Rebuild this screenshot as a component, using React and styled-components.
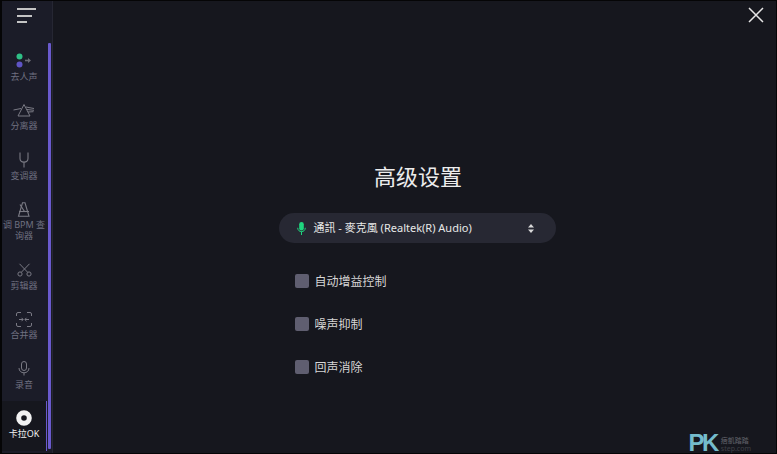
import React from 'react'
import styled, { createGlobalStyle } from 'styled-components'

const FONT = `"Noto Sans", "Noto Sans CJK SC", sans-serif`

const GlobalStyle = createGlobalStyle`
    html, body {
        margin: 0;
        padding: 0;
        background: #000;
    }
    * {
        box-sizing: border-box;
    }
`

const DualDots = () => (
    <svg width="20" height="16" viewBox="0 0 20 16">
        <circle cx="5.500" cy="3.500" r="3" fill="#2fbf86" />
        <circle cx="5.500" cy="11.500" r="3" fill="#5f54c4" />
        <path d="M11 7.500h4" stroke="#6c6c76" strokeWidth="1.600" />
        <path d="M14 5l3 2.500-3 2.500z" fill="#6c6c76" />
    </svg>
)

const Prism = () => (
    <svg width="22" height="14" viewBox="0 0 22 14" fill="none" stroke="#7a7a84" strokeWidth="1">
        <path d="M5 13L11 1.500 17 13z" />
        <path d="M0.500 7L8 5.500M13 4l8 1.500M14 6.500l7 .8M15 9l5.500-.3" />
    </svg>
)

const Fork = () => (
    <svg width="12" height="16" viewBox="0 0 12 16" fill="none" stroke="#7a7a84" strokeWidth="1.100">
        <path d="M2 .5v6c0 2.200 1.800 3.600 4 3.600s4-1.400 4-3.600v-6M6 10v5.500" />
    </svg>
)

const Metronome = () => (
    <svg width="14" height="15" viewBox="0 0 14 15" fill="none" stroke="#7a7a84" strokeWidth="1.100">
        <path d="M5.500 .8h2.500l4 13.500H1.500z" />
        <path d="M2 9.500h10" />
        <path d="M7.500 9.500L3 2.500" />
    </svg>
)

const Scissors = () => (
    <svg width="15" height="14" viewBox="0 0 15 14" fill="none" stroke="#7a7a84" strokeWidth="1">
        <circle cx="3" cy="11" r="2.100" />
        <circle cx="12" cy="11" r="2.100" />
        <path d="M4.300 9.300L12.500.8M10.700 9.300L2.500.8" />
    </svg>
)

const Merge = () => (
    <svg width="16" height="15" viewBox="0 0 16 15" fill="none" stroke="#7a7a84" strokeWidth="1">
        <path d="M.5 4V2a1.500 1.500 0 0 1 1.500-1.500h3M11 .5h3A1.500 1.500 0 0 1 15.500 2v2M15.500 11v2a1.500 1.500 0 0 1-1.500 1.500h-3M5 14.500H2A1.500 1.500 0 0 1 .5 13v-2" />
        <path d="M3 7.500h4M5.500 5.800l1.700 1.700-1.700 1.700M13 7.500H9M10.500 5.800L8.800 7.500l1.700 1.700" />
    </svg>
)

const Mic = () => (
    <svg width="12" height="15" viewBox="0 0 12 15" fill="none" stroke="#7a7a84" strokeWidth="1">
        <rect x="3.500" y=".5" width="5" height="9" rx="2.500" />
        <path d="M1 7c0 3 2.200 4.800 5 4.800s5-1.800 5-4.800M6 11.800v2.700" />
    </svg>
)

const GreenMic = () => (
    <svg width="9" height="13" viewBox="0 0 9 13">
        <rect x="2.200" y="0" width="4.600" height="8.500" rx="2.300" fill="#1fd67f" />
        <path d="M.7 5.800c0 2.400 1.700 3.800 3.800 3.800s3.800-1.400 3.800-3.800M4.500 9.600V13" fill="none" stroke="#1fd67f" strokeWidth="1" />
    </svg>
)

const Disc = () => (
    <svg width="16" height="16" viewBox="0 0 16 16">
        <circle cx="8" cy="8" r="5.300" fill="none" stroke="#f2f2f2" strokeWidth="5" />
    </svg>
)

const tools = [
    { label: '去人声', icon: <DualDots /> },
    { label: '分离器', icon: <Prism /> },
    { label: '变调器', icon: <Fork /> },
    { label: '调 BPM 查询器', icon: <Metronome /> },
    { label: '剪辑器', icon: <Scissors /> },
    { label: '合并器', icon: <Merge /> },
    { label: '录音', icon: <Mic /> },
    { label: '卡拉OK', icon: <Disc />, active: true },
]

const options = ['自动增益控制', '噪声抑制', '回声消除']

function App() {
    return (
        <Page>
            <GlobalStyle />
            <Sidebar>
                <MenuButton>
                    <MenuLine $w={19} />
                    <MenuLine $w={15} />
                    <MenuLine $w={10} />
                </MenuButton>
                <ToolList>
                    {tools.map((tool) => (
                        <ToolItem key={tool.label} $active={tool.active}>
                            <ToolIcon>{tool.icon}</ToolIcon>
                            <ToolLabel $active={tool.active}>{tool.label}</ToolLabel>
                        </ToolItem>
                    ))}
                    <ScrollThumb />
                </ToolList>
            </Sidebar>
            <Main>
                <TopBar>
                    <svg width="16" height="16" viewBox="0 0 16 16" stroke="#e6e6e6" strokeWidth="1.500">
                        <path d="M1 1l14 14M15 1L1 15" />
                    </svg>
                </TopBar>
                <Title>高级设置</Title>
                <DeviceSelect>
                    <GreenMic />
                    <DeviceName>通訊 - 麥克風 (Realtek(R) Audio)</DeviceName>
                    <svg width="6" height="9" viewBox="0 0 6 9" fill="#d8d8d8">
                        <path d="M3 0l3 3.500H0zM3 9L0 5.500h6z" />
                    </svg>
                </DeviceSelect>
                <OptionList>
                    {options.map((option) => (
                        <Option key={option}>
                            <CheckBox />
                            {option}
                        </Option>
                    ))}
                </OptionList>
                <Watermark>
                    <WatermarkLogo>PK</WatermarkLogo>
                    <WatermarkText>
                        <WatermarkName>痞凱踏踏</WatermarkName>
                        <span>step.com</span>
                    </WatermarkText>
                </Watermark>
            </Main>
        </Page>
    )
}

export default App

const Page = styled.div`
    width: 777px;
    height: 454px;
    display: flex;
    overflow: hidden;
    border: 1px solid #050506;
    border-left-width: 2px;
    background: #16171e;
    font-family: ${FONT};
`

const Sidebar = styled.div`
    width: 51px;
    flex-shrink: 0;
    display: flex;
    flex-direction: column;
    background: #1b1c28;
    border-right: 1px solid #262733;
`

const MenuButton = styled.div`
    height: 42px;
    padding: 7px 0 0 15px;
    display: flex;
    flex-direction: column;
    gap: 4.500px;
`

const MenuLine = styled.div`
    width: ${(p) => p.$w}px;
    height: 2px;
    background: #c4c4c4;
`

const ToolList = styled.div`
    position: relative;
    flex: 1;
    display: flex;
    flex-direction: column;
    padding-top: 0.700px;
`

const ToolItem = styled.div`
    width: 45px;
    flex-shrink: 0;
    display: flex;
    flex-direction: column;
    align-items: center;
    padding: 9px 0 11.500px;
    border-right: 1px solid ${(p) => (p.$active ? '#6a5acd' : 'transparent')};
    background: ${(p) => (p.$active ? '#16171e' : 'transparent')};
`

const ToolIcon = styled.div`
    height: 16px;
    display: flex;
    align-items: center;
    justify-content: center;
`

const ToolLabel = styled.div`
    margin-top: 2px;
    width: 44px;
    flex-shrink: 0;
    font-size: 9px;
    line-height: 11px;
    text-align: center;
    color: ${(p) => (p.$active ? '#f0f0f0' : '#6f7080')};
`

const ScrollThumb = styled.div`
    position: absolute;
    top: 0;
    bottom: 4px;
    left: 46px;
    width: 3px;
    background: #6a5acd;
    border-radius: 1px;
`

const Main = styled.div`
    position: relative;
    flex: 1;
    display: flex;
    flex-direction: column;
    align-items: center;
    padding-left: 5px;
`

const TopBar = styled.div`
    align-self: stretch;
    height: 160px;
    display: flex;
    justify-content: flex-end;
    padding: 6px 12px 0 0;
`

const Title = styled.div`
    margin-left: 2px;
    font-size: 22px;
    line-height: 30px;
    color: #ececec;
`

const DeviceSelect = styled.div`
    margin-top: 22px;
    width: 277px;
    height: 30px;
    padding: 0 22px 0 18px;
    display: flex;
    align-items: center;
    border-radius: 15px;
    background: #272833;
`

const DeviceName = styled.div`
    flex: 1;
    margin-left: 8px;
    margin-top: -2px;
    font-size: 11px;
    color: #e8e8e8;
`

const OptionList = styled.div`
    width: 277px;
    margin-top: 28px;
    padding-left: 16px;
    display: flex;
    flex-direction: column;
    gap: 23px;
`

const Option = styled.div`
    height: 20px;
    display: flex;
    align-items: center;
    gap: 6px;
    font-size: 12px;
    color: #d6d6d6;
`

const CheckBox = styled.div`
    width: 14px;
    height: 14px;
    border-radius: 2px;
    background: #5f5e70;
`

const Watermark = styled.div`
    position: absolute;
    right: 25px;
    bottom: 0;
    display: flex;
    align-items: flex-end;
    gap: 4px;
`

const WatermarkLogo = styled.div`
    font-family: "Liberation Sans", sans-serif;
    font-size: 24px;
    line-height: 21px;
    letter-spacing: -2.500px;
    font-weight: 700;
    color: #74bccc;
`

const WatermarkText = styled.div`
    display: flex;
    flex-direction: column;
    font-size: 7px;
    line-height: 8px;
    color: #3f4047;
`

const WatermarkName = styled.span`
    color: #63646c;
`
